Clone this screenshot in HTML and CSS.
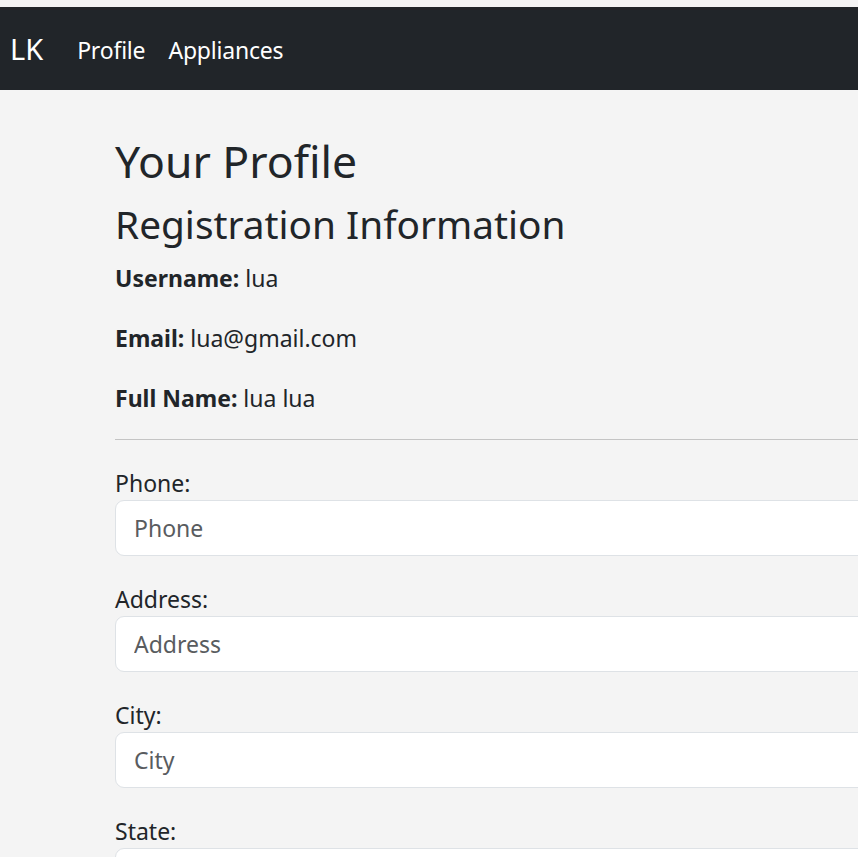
FILE: index.html
```html
<!DOCTYPE html>
<html lang="en">
<head>
<meta charset="utf-8">
<title>Your Profile</title>
<link rel="stylesheet" href="styles.css">
</head>
<body>
<nav class="navbar">
  <a class="brand" href="#">LK</a>
  <ul class="nav">
    <li><a class="nav-link" href="#">Profile</a></li>
    <li><a class="nav-link" href="#">Appliances</a></li>
  </ul>
</nav>
<main class="content">
  <h1 class="title">Your Profile</h1>
  <h2 class="subtitle">Registration Information</h2>
  <p class="info"><strong>Username:</strong> lua</p>
  <p class="info"><strong>Email:</strong> lua@gmail.com</p>
  <p class="info"><strong>Full Name:</strong> lua lua</p>
  <hr class="divider">
  <form class="form">
    <div class="group">
      <label class="label" for="phone">Phone:</label>
      <input class="control" id="phone" type="text" placeholder="Phone">
    </div>
    <div class="group">
      <label class="label" for="address">Address:</label>
      <input class="control" id="address" type="text" placeholder="Address">
    </div>
    <div class="group">
      <label class="label" for="city">City:</label>
      <input class="control" id="city" type="text" placeholder="City">
    </div>
    <div class="group">
      <label class="label" for="state">State:</label>
      <input class="control" id="state" type="text" placeholder="State">
    </div>
  </form>
</main>
</body>
</html>
```

FILE: styles.css
```css
html, body {
  overflow-x: hidden;
}
body {
  margin: 0;
  padding-top: 7px;
  background: #f4f4f4;
  color: #212529;
  font-family: "Segoe UI", "Noto Sans", "Liberation Sans", sans-serif;
  font-size: 23px;
  line-height: 36px;
}
.navbar {
  background: #212529;
  height: 83px;
  display: flex;
  align-items: center;
  padding-left: 10px;
}
.brand {
  color: #fff;
  text-decoration: none;
  font-size: 29px;
  line-height: 45px;
  margin-right: 34px;
}
.nav {
  display: flex;
  gap: 23px;
  list-style: none;
  margin: 0;
  padding: 2px 0 0;
}
.nav-link {
  color: #fff;
  text-decoration: none;
  font-size: 23px;
  letter-spacing: -0.2px;
}
.content {
  margin-left: 115px;
  width: 1200px;
  padding-top: 43px;
}
.title {
  font-size: 44.5px;
  font-weight: 400;
  line-height: 55px;
  margin: 0 0 12px;
}
.subtitle {
  font-size: 38.8px;
  font-weight: 400;
  line-height: 49px;
  margin: 0 0 10px;
}
.info {
  margin: 0 0 24px;
  padding-top: 3px;
  line-height: 33px;
}
.info strong {
  font-weight: 700;
}
.divider {
  border: 0;
  border-top: 1px solid #c4c4c4;
  margin: 0 0 24px;
}
.group {
  margin-bottom: 24px;
}
.label {
  display: block;
  padding-top: 3px;
  line-height: 33px;
}
.control {
  display: block;
  box-sizing: border-box;
  width: 100%;
  height: 56px;
  padding: 0 18px;
  font: inherit;
  line-height: normal;
  color: #212529;
  background: #fff;
  border: 1px solid #dee2e6;
  border-radius: 9px;
}
.control::placeholder {
  color: #595c5f;
}
```
